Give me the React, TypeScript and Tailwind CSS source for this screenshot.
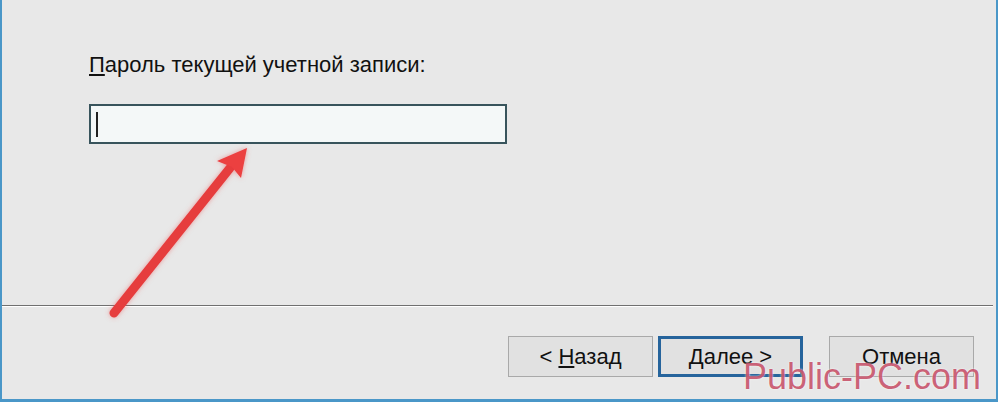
import React from "react";

function Arrow() {
  return (
    <svg
      className="pointer-events-none absolute left-0 top-0"
      width={998}
      height={402}
      viewBox="0 0 998 402"
    >
      <defs>
        <filter id="glow" x="-20%" y="-20%" width="140%" height="140%">
          <feGaussianBlur in="SourceAlpha" stdDeviation="2.5" result="b" />
          <feFlood floodColor="#e85a5a" floodOpacity="0.55" />
          <feComposite in2="b" operator="in" result="s" />
          <feMerge>
            <feMergeNode in="s" />
            <feMergeNode in="SourceGraphic" />
          </feMerge>
        </filter>
      </defs>
      <g filter="url(#glow)">
        <line x1={114} y1={313} x2={230} y2={168} stroke="#e63c3e" strokeWidth={9} strokeLinecap="round" />
        <polygon points="247,148 241,178 232,167 217,161" fill="#ec3f40" />
      </g>
    </svg>
  );
}

function Btn({ children, primary }: { children: React.ReactNode; primary?: boolean }) {
  return (
    <button
      className={`flex h-[41px] w-[145px] items-center justify-center bg-[#e1e1e1] text-[22px] text-[#111] ${
        primary ? "border-[3px] border-[#26649c]" : "border border-[#a9a9a9]"
      }`}
    >
      {children}
    </button>
  );
}

export default function App() {
  return (
    <div className="relative h-[402px] w-[998px] overflow-hidden font-['Liberation_Sans',Arial,sans-serif]">
      <div className="flex h-full flex-col border-b-[3px] border-l-2 border-r-[2px] border-[#4a97c8] bg-[#e8e8e8]">
        <div className="h-[305px] pl-[87px] pt-[53px]">
          <p className="text-[22px] leading-[24px] text-[#111]">
            <span className="underline underline-offset-2">П</span>ароль текущей учетной записи:
          </p>
          <div className="mt-[27px] flex h-[40px] w-[418px] items-center border-2 border-[#38545c] bg-[#f4f8f8] pl-[5px]">
            <div className="h-[25px] w-[2px] bg-[#222]" />
          </div>
        </div>
        <div className="mr-[3px] border-t border-[#707070]" />
        <div className="mr-[3px] border-t border-white" />
        <div className="flex flex-1 justify-end gap-[5px] pr-[22px] pt-[29px]">
          <Btn>
            &lt;&nbsp;<span className="underline underline-offset-2">Н</span>азад
          </Btn>
          <Btn primary>
            <span className="underline underline-offset-2">Д</span>алее &gt;
          </Btn>
          <div className="w-[16px]" />
          <Btn>Отмена</Btn>
        </div>
      </div>
      <Arrow />
      <div className="pointer-events-none absolute left-[743px] top-[357px] text-[36px] leading-[40px] text-[rgba(185,40,70,0.72)] [text-shadow:0_0_2px_rgba(255,255,255,0.9)]">
        Public-PC.com
      </div>
    </div>
  );
}
